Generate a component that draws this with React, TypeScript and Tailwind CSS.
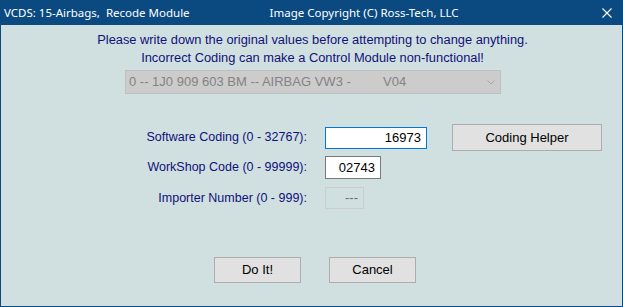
import React from "react";

const arial = { fontFamily: '"Liberation Sans", Arial, sans-serif' };

export default function App() {
  return (
    <div className="w-[623px] h-[307px] flex flex-col border border-t-0 border-[#0a4a80] overflow-hidden" style={arial}>
      <div
        className="h-[25px] shrink-0 bg-[#0a4a80] text-white text-[11.5px] flex items-center relative"
        style={{ fontFamily: '"Noto Sans", "Open Sans", sans-serif' }}
      >
        <span className="ml-[3px] whitespace-pre">VCDS: 15-Airbags,  Recode Module</span>
        <span className="ml-[80px] whitespace-pre">Image Copyright (C) Ross-Tech, LLC</span>
        <svg className="absolute right-[10px] top-[8px]" width="10" height="10" viewBox="0 0 10 10">
          <path d="M0.5 0.5 L9.5 9.5 M9.5 0.5 L0.5 9.5" stroke="#ffffff" strokeWidth="1.1" fill="none" />
        </svg>
      </div>
      <div className="flex-1 bg-[#d0e0e0] flex flex-col pt-[6px] text-[13px]">
        <div className="text-center text-[#10107a] leading-[18px] pl-[2px] text-[12.85px]">
          Please write down the original values before attempting to change anything.
        </div>
        <div className="text-center text-[#10107a] leading-[18px] pl-[2px] text-[12.85px]">
          Incorrect Coding can make a Control Module non-functional!
        </div>
        <div className="ml-[124px] mt-[3px] w-[376px] h-[24px] bg-[#cccccc] border border-[#bfbfbf] flex items-center relative text-[#838383]">
          <span className="ml-[3px] inline-block w-[254px] whitespace-pre">0 -- 1J0 909 603 BM -- AIRBAG VW3 -</span>
          <span>V04</span>
          <svg className="absolute right-[5px] top-[9px]" width="8" height="5" viewBox="0 0 8 5">
            <path d="M0.5 0.5 L4 4 L7.5 0.5" stroke="#a6a6a6" strokeWidth="1" fill="none" />
          </svg>
        </div>

        <div className="mt-[30px] flex items-center h-[27px]">
          <div className="w-[306px] text-right text-[#10107a] text-[12.5px]">Software Coding (0 - 32767):</div>
          <div className="ml-[18px] w-[102px] h-[22px] bg-white border border-[#0078d7] flex items-center justify-end pr-[5px] text-black">
            16973
          </div>
          <button className="ml-[25px] w-[150px] h-[27px] bg-[#e1e1e1] border border-[#adadad] text-black text-[13px]">
            Coding Helper
          </button>
        </div>
        <div className="mt-[5px] flex items-center h-[23px]">
          <div className="w-[306px] text-right text-[#10107a] text-[12.5px]">WorkShop Code (0 - 99999):</div>
          <div className="ml-[18px] w-[56px] h-[23px] bg-white border border-[#7a7a7a] flex items-center justify-end pr-[5px] text-black">
            02743
          </div>
        </div>
        <div className="mt-[8px] flex items-center h-[22px]">
          <div className="w-[306px] text-right text-[#10107a] text-[12.5px]">Importer Number (0 - 999):</div>
          <div className="ml-[18px] w-[39px] h-[22px] border border-[#cccccc] flex items-center justify-end pr-[5px] text-[#6d6d6d]">
            ---
          </div>
        </div>

        <div className="mt-[48px] ml-[213px] flex gap-[28px]">
          <button className="w-[87px] h-[26px] bg-[#e1e1e1] border border-[#adadad] text-black text-[13px]">Do It!</button>
          <button className="w-[87px] h-[26px] bg-[#e1e1e1] border border-[#adadad] text-black text-[13px]">Cancel</button>
        </div>
      </div>
    </div>
  );
}
